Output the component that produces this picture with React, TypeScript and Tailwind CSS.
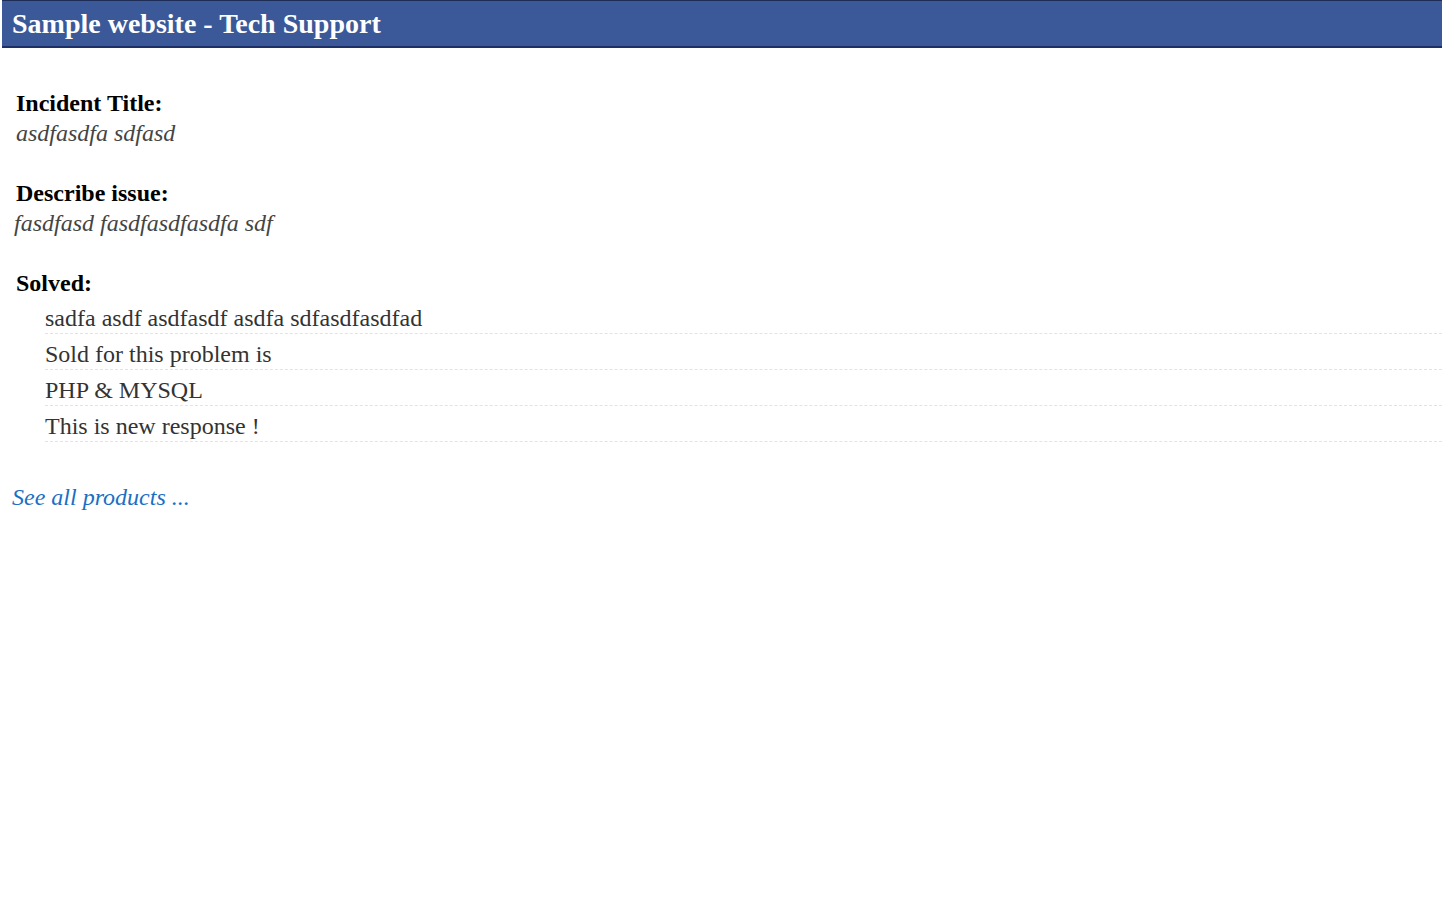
import React from "react";

export default function App() {
  const items = [
    "sadfa asdf asdfasdf asdfa sdfasdfasdfad",
    "Sold for this problem is",
    "PHP & MYSQL",
    "This is new response !",
  ];
  return (
    <div className="min-h-[900px] bg-white" style={{ fontFamily: '"Liberation Serif", "Times New Roman", serif' }}>
      <div className="ml-[2px] h-[48px] bg-[#3b5998] border-t border-t-[#1e2d55] border-b-2 border-b-[#1c2f66] pl-[10px] flex items-center">
        <h1 className="text-[28px] font-bold text-white leading-none">Sample website - Tech Support</h1>
      </div>
      <div className="pt-[40px] pl-[16px]">
        <div className="text-[24px] font-bold text-black leading-[30px]">Incident Title:</div>
        <div className="text-[24px] italic text-[#444] leading-[30px]">asdfasdfa sdfasd</div>
        <div className="h-[30px]" />
        <div className="text-[24px] font-bold text-black leading-[30px]">Describe issue:</div>
        <div className="text-[24px] italic text-[#444] leading-[30px] -ml-[2px]">fasdfasd fasdfasdfasdfa sdf</div>
        <div className="h-[30px]" />
        <div className="text-[24px] font-bold text-black leading-[30px]">Solved:</div>
        <ul className="ml-[29px]">
          {items.map((t) => (
            <li key={t} className="text-[24px] text-[#333] pt-[5px] leading-[30px] border-b border-dashed border-b-[#e3e3e3]">
              {t}
            </li>
          ))}
        </ul>
      </div>
      <div className="pt-[40px] pl-[12px] leading-[30px]">
        <a className="text-[24px] italic text-[#1a6fc4]" href="#">See all products ...</a>
      </div>
    </div>
  );
}
